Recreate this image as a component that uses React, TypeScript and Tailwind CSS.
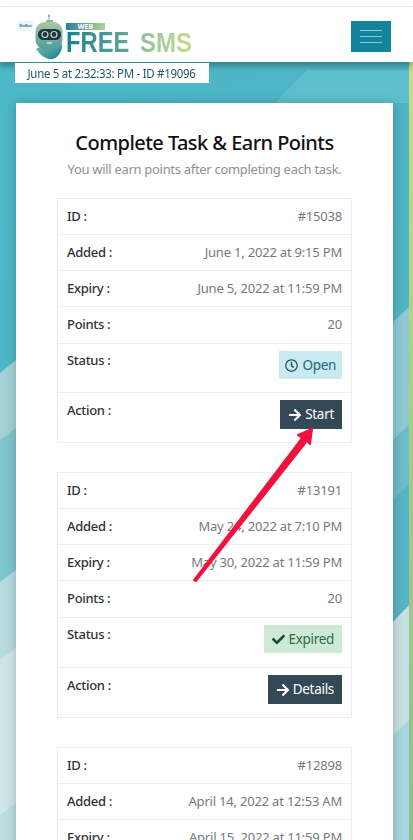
import { FaArrowRight, FaCheck, FaRegClock } from "react-icons/fa";

type Task = {
  id: string;
  added: string;
  expiry: string;
  points?: string;
  status?: "open" | "expired";
  action?: string;
};

const tasks: Task[] = [
  { id: "#15038", added: "June 1, 2022 at 9:15 PM", expiry: "June 5, 2022 at 11:59 PM", points: "20", status: "open", action: "Start" },
  { id: "#13191", added: "May 24, 2022 at 7:10 PM", expiry: "May 30, 2022 at 11:59 PM", points: "20", status: "expired", action: "Details" },
  { id: "#12898", added: "April 14, 2022 at 12:53 AM", expiry: "April 15, 2022 at 11:59 PM" },
];

export default function App() {
  return (
    <div className="relative w-[413px] h-[840px] overflow-hidden bg-white font-['Noto_Sans',sans-serif]">
      <div className="h-[7px] bg-white border-b border-[#eeeeee]" />
      <Header />
      <main className="relative flex h-[778px]">
        <Backdrop />
        <div className="relative flex-1 min-w-0">
          <div className="relative z-20 ml-[15px] mt-px w-[194px] h-[20px] bg-white flex justify-center text-[13px] leading-[20px] tracking-[-0.3px] text-[#24566d] whitespace-nowrap">
            <span className="inline-block shrink-0 scale-x-[0.88]">June 5 at 2:32:33: PM - ID #19096</span>
          </div>
          <section className="ml-[16px] mt-[20px] w-[377px] bg-white pt-[24px] px-[41px] shadow-[0_0_10px_rgba(0,0,0,0.22)]">
            <h1 className="text-center text-[20px] leading-[32px] font-medium tracking-[-0.55px] text-[#111111] whitespace-nowrap">
              Complete Task &amp; Earn Points
            </h1>
            <p className="text-center text-[13px] leading-[20px] tracking-[-0.3px] text-[#8b9196] whitespace-nowrap">
              You will earn points after completing each task.
            </p>
            <div className="mt-[19px] flex flex-col gap-[29px]">
              {tasks.map((task) => (
                <TaskTable key={task.id} task={task} />
              ))}
            </div>
          </section>
        </div>
        <div className="relative w-[4px] bg-gradient-to-b from-[#c9dd8a] via-[#a5cb88] to-[#8cbd92]" />
      </main>
      <PointerArrow />
    </div>
  );
}

function Header() {
  return (
    <header className="relative z-10 h-[55px] bg-white flex items-start justify-between pl-[17px] pr-[22px] shadow-[0_4px_6px_rgba(0,0,0,0.3)]">
      <Logo />
      <button className="mt-[14px] w-[40px] h-[31px] bg-[#14849c] flex flex-col items-center justify-center gap-[5px]">
        <span className="block w-[22px] h-px bg-[#8fcbd6]" />
        <span className="block w-[22px] h-px bg-[#8fcbd6]" />
        <span className="block w-[22px] h-px bg-[#8fcbd6]" />
      </button>
    </header>
  );
}

function Logo() {
  return (
    <div className="flex items-start h-[55px]">
      <div className="mt-[14px] w-[17px] h-[10px] rounded-[4px] bg-[#eef3f3] text-[4px] leading-[10px] font-bold text-center text-[#3d7f8d]">
        BizBot
      </div>
      <svg width="32" height="46" viewBox="0 0 32 46" className="mt-[7px] -ml-px shrink-0">
        <defs>
          <linearGradient id="head" x1="0" y1="0" x2="0" y2="1">
            <stop offset="0" stopColor="#a9c9a4" />
            <stop offset="1" stopColor="#4f9d9d" />
          </linearGradient>
          <linearGradient id="body" x1="0" y1="0" x2="1" y2="1">
            <stop offset="0" stopColor="#7fbcae" />
            <stop offset="1" stopColor="#12808f" />
          </linearGradient>
        </defs>
        <path d="M16 0.5v7" stroke="#9aa8a8" strokeWidth="1" />
        <circle cx="16" cy="2" r="1.2" fill="#9aa8a8" />
        <rect x="13" y="6" width="7" height="4" rx="1" fill="#88b5a9" />
        <path d="M3 35c4-3 8-3 12-2 6 0 11-1 14-3 1 6-3 13-9 15-6 1-12-3-17-10z" fill="url(#body)" />
        <rect x="2.5" y="8" width="27" height="27" rx="9" fill="url(#head)" />
        <rect x="5" y="15" width="23" height="11" rx="5.5" fill="#23343c" />
        <circle cx="12" cy="20.5" r="3" fill="none" stroke="#b8d8d8" strokeWidth="1.2" />
        <circle cx="21" cy="20.5" r="3" fill="none" stroke="#b8d8d8" strokeWidth="1.2" />
        <path d="M14 29h5" stroke="#eef6f2" strokeWidth="1.2" />
      </svg>
      <div className="ml-[1px] mt-[16px] flex flex-col">
        <div className="w-[39px] h-[7px] bg-gradient-to-r from-[#1d8296] to-[#b4d28f] text-center text-[7px] leading-[7px] font-bold text-white">
          WEB
        </div>
        <div className="mt-[-1px] flex items-baseline whitespace-nowrap font-['Liberation_Sans',sans-serif] font-bold text-[29px] leading-[27px]">
          <span className="inline-block mr-[-14px] origin-left scale-x-[0.82] bg-gradient-to-r from-[#14808f] to-[#5fa899] bg-clip-text text-transparent">FREE</span>
          <span className="ml-[11px] inline-block origin-left scale-x-[0.89] text-[27px] bg-gradient-to-r from-[#8cc09c] to-[#c6da8c] bg-clip-text text-transparent">SMS</span>
        </div>
      </div>
    </div>
  );
}

function Backdrop() {
  return (
    <svg className="absolute inset-0" width="413" height="778" viewBox="0 62 413 778">
      <defs>
        <linearGradient id="sea" x1="0" y1="0" x2="1" y2="1">
          <stop offset="0" stopColor="#4cb8c8" />
          <stop offset="1" stopColor="#52b3c3" />
        </linearGradient>
      </defs>
      <rect x="0" y="62" width="413" height="778" fill="url(#sea)" />
      <polygon points="275,103 307,70 409,70 409,103" fill="#5fc0cd" />
      <polygon points="0,373 16,360 16,840 0,840" fill="#a2d2d6" />
      <polygon points="0,440 16,428 16,840 0,840" fill="#7fc5cd" />
      <polygon points="0,582 16,570 16,840 0,840" fill="#b7dcdf" />
      <polygon points="0,660 16,648 16,840 0,840" fill="#d0e5e8" />
      <polygon points="0,815 16,803 16,840 0,840" fill="#bcdde0" />
      <polygon points="393,322 409,307 409,840 393,840" fill="#8fc9d2" />
      <polygon points="393,440 409,425 409,840 393,840" fill="#6cbcc9" />
      <polygon points="393,500 409,485 409,840 393,840" fill="#56b4c4" />
      <polygon points="393,622 409,605 409,840 393,840" fill="#c6dfe1" />
      <polygon points="393,735 409,720 409,840 393,840" fill="#a8d6de" />
    </svg>
  );
}

function TaskTable({ task }: { task: Task }) {
  return (
    <div className="border border-[#eceeef] text-[13px]">
      <Row label="ID :" className="h-[36px]">{task.id}</Row>
      <Row label="Added :" className="h-[36px]">{task.added}</Row>
      <Row label="Expiry :" className="h-[36px]">{task.expiry}</Row>
      {task.points && <Row label="Points :" className="h-[37px]">{task.points}</Row>}
      {task.status && (
        <Row
          label="Status :"
          className={`${task.status === "open" ? "h-[49px]" : "h-[50px]"} pt-[7px] items-start`}
        >
          <StatusBadge status={task.status} />
        </Row>
      )}
      {task.action && (
        <Row label="Action :" labelClass="mt-px" className="h-[49px] pt-[7px] items-start">
          <button className="h-[29px] px-[8px] bg-[#344856] text-white text-[13.5px] tracking-[-0.3px] flex items-center gap-[3px]">
            <FaArrowRight className="text-[14px]" />
            {task.action}
          </button>
        </Row>
      )}
    </div>
  );
}

function Row({
  label,
  labelClass = "",
  className,
  children,
}: {
  label: string;
  labelClass?: string;
  className: string;
  children: React.ReactNode;
}) {
  return (
    <div
      className={`${className} flex items-center justify-between px-[9px] border-b border-[#eceeef] last:border-b-0 whitespace-nowrap`}
    >
      <span className={`${labelClass} font-medium tracking-[-0.3px] text-[#2f3336]`}>{label}</span>
      <span className="text-[#75797d] tracking-[-0.2px]">{children}</span>
    </div>
  );
}

function StatusBadge({ status }: { status: "open" | "expired" }) {
  if (status === "open") {
    return (
      <span className="h-[28px] px-[6px] bg-[#cbe9f0] text-[#20687b] text-[13.5px] tracking-[-0.3px] flex items-center gap-[4px]">
        <FaRegClock className="text-[13px] text-[#14505f]" />
        Open
      </span>
    );
  }
  return (
    <span className="h-[28px] px-[8px] bg-[#cfe9d7] text-[#2b6b47] text-[13.5px] tracking-[-0.3px] flex items-center gap-[3px]">
      <FaCheck className="text-[13px] text-[#14532f]" />
      Expired
    </span>
  );
}

function PointerArrow() {
  return (
    <svg className="absolute left-0 top-0 pointer-events-none" width="413" height="840" viewBox="0 0 413 840">
      <polygon
        points="194,580 196,581 307,441 310,444 312,429 298,435 302,438"
        fill="#f0123c"
        stroke="#f0123c"
        strokeWidth="2"
        strokeLinejoin="round"
      />
    </svg>
  );
}
